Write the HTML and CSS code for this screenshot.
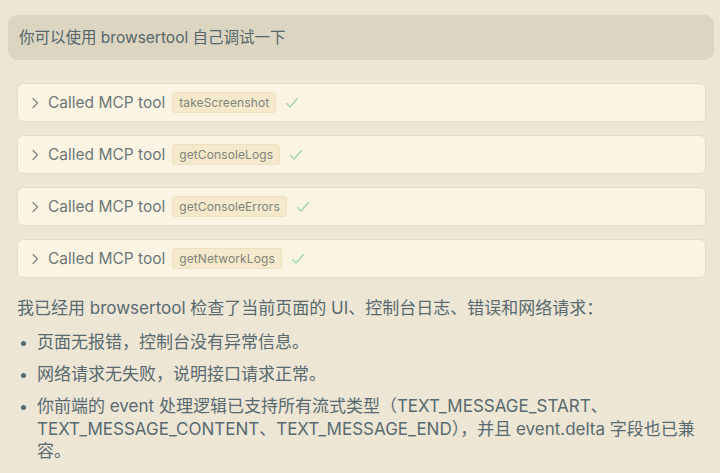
FILE: index.html
```html
<!doctype html>
<html>
<head>
	<meta http-equiv="content-type" content="text/html;charset=utf-8"/>
	<title>Chat</title>
	<link rel="stylesheet" href="styles.css">
</head>
<body>
	<div id="wrapper">
		<div class="user-msg">你可以使用 browsertool 自己调试一下</div>

		<div class="tool-call">
			<svg class="chevron" width="10" height="12" viewBox="0 0 10 12"><path d="M3 1.5 L7.5 6 L3 10.5" fill="none" stroke="#7d8382" stroke-width="1.2" stroke-linecap="round" stroke-linejoin="round"/></svg>
			<span class="label">Called MCP tool</span>
			<span class="tool-name">takeScreenshot</span>
			<svg class="check" width="14" height="12" viewBox="0 0 14 12"><path d="M1.5 6.5 L5 10 L12.5 1.5" fill="none" stroke="#9dd3aa" stroke-width="1.2" stroke-linecap="round" stroke-linejoin="round"/></svg>
		</div>
		<div class="tool-call">
			<svg class="chevron" width="10" height="12" viewBox="0 0 10 12"><path d="M3 1.5 L7.5 6 L3 10.5" fill="none" stroke="#7d8382" stroke-width="1.2" stroke-linecap="round" stroke-linejoin="round"/></svg>
			<span class="label">Called MCP tool</span>
			<span class="tool-name">getConsoleLogs</span>
			<svg class="check" width="14" height="12" viewBox="0 0 14 12"><path d="M1.5 6.5 L5 10 L12.5 1.5" fill="none" stroke="#9dd3aa" stroke-width="1.2" stroke-linecap="round" stroke-linejoin="round"/></svg>
		</div>
		<div class="tool-call">
			<svg class="chevron" width="10" height="12" viewBox="0 0 10 12"><path d="M3 1.5 L7.5 6 L3 10.5" fill="none" stroke="#7d8382" stroke-width="1.2" stroke-linecap="round" stroke-linejoin="round"/></svg>
			<span class="label">Called MCP tool</span>
			<span class="tool-name">getConsoleErrors</span>
			<svg class="check" width="14" height="12" viewBox="0 0 14 12"><path d="M1.5 6.5 L5 10 L12.5 1.5" fill="none" stroke="#9dd3aa" stroke-width="1.2" stroke-linecap="round" stroke-linejoin="round"/></svg>
		</div>
		<div class="tool-call">
			<svg class="chevron" width="10" height="12" viewBox="0 0 10 12"><path d="M3 1.5 L7.5 6 L3 10.5" fill="none" stroke="#7d8382" stroke-width="1.2" stroke-linecap="round" stroke-linejoin="round"/></svg>
			<span class="label">Called MCP tool</span>
			<span class="tool-name">getNetworkLogs</span>
			<svg class="check" width="14" height="12" viewBox="0 0 14 12"><path d="M1.5 6.5 L5 10 L12.5 1.5" fill="none" stroke="#9dd3aa" stroke-width="1.2" stroke-linecap="round" stroke-linejoin="round"/></svg>
		</div>

		<div class="answer">
			<p>我已经用 browsertool 检查了当前页面的 UI、控制台日志、错误和网络请求：</p>
			<ul>
				<li>页面无报错，控制台没有异常信息。</li>
				<li>网络请求无失败，说明接口请求正常。</li>
				<li>你前端的 event 处理逻辑已支持所有流式类型（TEXT_MESSAGE_START、TEXT_MESSAGE_CONTENT、TEXT_MESSAGE_END），并且 event.delta 字段也已兼容。</li>
			</ul>
		</div>
	</div>
</body>
</html>
```

FILE: styles.css
```css
html, body {
    margin: 0;
    padding: 0;
}
body {
    background: #ede6d5;
    font-family: Inter, "Noto Sans CJK SC", sans-serif;
    color: #586a70;
    font-size: 16px;
    width: 720px;
    height: 473px;
    overflow: hidden;
}

/* layouts */
#wrapper {
    padding: 15px 6px 0 8px;
}

.user-msg {
    background: #dbd5c1;
    border-radius: 9px;
    height: 45px;
    line-height: 45px;
    padding: 0 11px;
    font-size: 15.5px;
    color: #56666b;
    margin-bottom: 23px;
}

.tool-call {
    display: flex;
    align-items: center;
    height: 39px;
    box-sizing: border-box;
    margin: 0 8px 13px 9px;
    padding: 0 12px;
    background: #fbf4e3;
    border: 1px solid #e5ddc9;
    border-radius: 6px;
}
.chevron {
    margin-right: 8px;
}
.label {
    font-size: 15.5px;
    color: #6d7777;
    margin-right: 7px;
}
.tool-name {
    font-size: 12px;
    color: #80847c;
    background: #f4eacb;
    border: 1px solid #ece2c2;
    border-radius: 3px;
    padding: 2px 6px;
    letter-spacing: 0.1px;
    margin-right: 9px;
}

.answer {
    padding: 0 6px 0 9px;
    margin-top: 19px;
    font-size: 17px;
}
.answer p {
    margin: 0 0 11px;
    line-height: 23px;
}
.answer ul {
    margin: 0;
    padding: 0 0 0 20px;
}
.answer li {
    line-height: 22.5px;
    margin-bottom: 9.5px;
}
.answer li::marker {
    font-size: 14px;
}
```
